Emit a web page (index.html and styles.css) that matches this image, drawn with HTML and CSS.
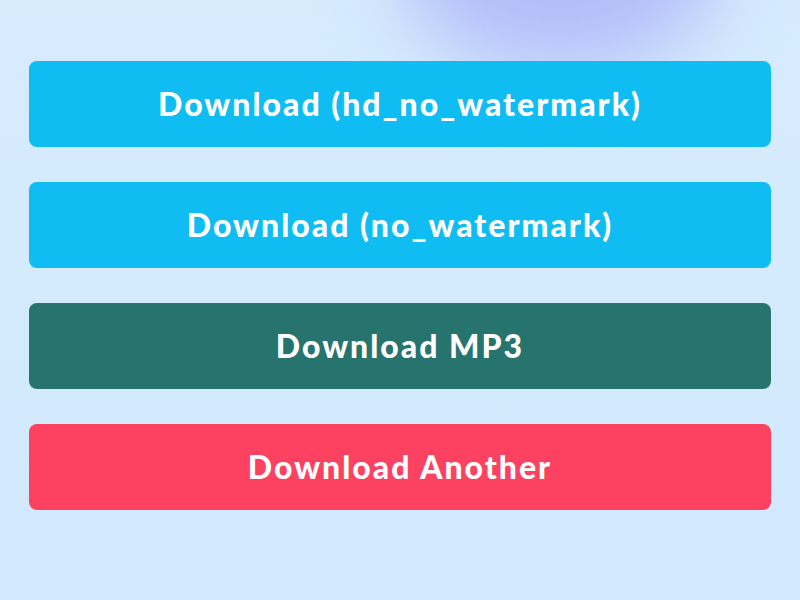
FILE: index.html
```html
<!DOCTYPE html>
<html lang="en">
<head>
<meta charset="utf-8">
<title>Download</title>
<link rel="stylesheet" href="styles.css">
</head>
<body>
<div class="page">
  <div class="glow"></div>
  <div class="actions">
    <a class="btn btn-cyan" href="#">Download (hd_no_watermark)</a>
    <a class="btn btn-cyan" href="#">Download (no_watermark)</a>
    <a class="btn btn-teal" href="#">Download MP3</a>
    <a class="btn btn-red" href="#">Download Another</a>
  </div>
</div>
</body>
</html>
```
FILE: styles.css
```css
html, body {
  margin: 0;
  padding: 0;
}

body {
  width: 800px;
  height: 600px;
  overflow: hidden;
  background: #d4eafd;
  font-family: Lato, "Open Sans", sans-serif;
}

.page {
  position: relative;
  width: 800px;
  height: 600px;
  background: linear-gradient(180deg, #d6ecfd 0%, #d2e9fd 100%);
}

/* soft violet light near the top edge */
.glow {
  position: absolute;
  left: 400px;
  top: -150px;
  width: 320px;
  height: 220px;
  border-radius: 50%;
  background: #b2bcf9;
  filter: blur(40px);
}

.actions {
  position: relative;
  display: flex;
  flex-direction: column;
  gap: 35px;
  padding: 61px 29px 0 29px;
}

.btn {
  display: flex;
  align-items: center;
  justify-content: center;
  height: 86px;
  border-radius: 8px;
  color: #ffffff;
  text-decoration: none;
  font-weight: 900;
  font-size: 32px;
  letter-spacing: 2px;
  padding-bottom: 1px;
  box-sizing: border-box;
}

.btn-cyan { background: #0fbdf2; }
.btn-teal { background: #27736d; }
.btn-red  { background: #fd4160; }
```
